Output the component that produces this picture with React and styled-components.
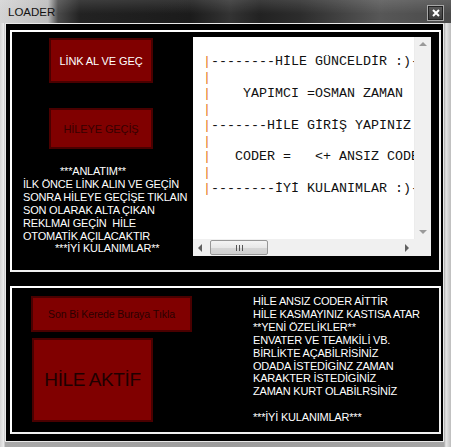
import React from 'react';
import styled, { createGlobalStyle } from 'styled-components';

const GlobalStyle = createGlobalStyle`
  html, body {
    margin: 0;
    padding: 0;
    background: #b4b4b4;
  }
  * {
    box-sizing: border-box;
  }
`;

const infoLines = [
  { text: '***ANLATIM**', indent: 37 },
  { text: 'İLK ÖNCE LİNK ALIN VE GEÇİN' },
  { text: 'SONRA HİLEYE GEÇİŞE TIKLAIN' },
  { text: 'SON OLARAK ALTA ÇIKAN' },
  { text: 'REKLMAI GEÇİN  HİLE' },
  { text: 'OTOMATİK AÇILACAKTIR' },
  { text: '***İYİ KULANIMLAR**', indent: 32 },
];

const featureLines = [
  'HİLE ANSIZ CODER AİTTİR',
  'HİLE KASMAYINIZ KASTISA ATAR',
  '**YENİ ÖZELİKLER**',
  'ENVATER VE TEAMKİLİ VB.',
  'BİRLİKTE AÇABİLRİSİNİZ',
  'ODADA İSTEDİGİNZ ZAMAN',
  'KARAKTER İSTEDİGİNİZ',
  'ZAMAN KURT OLABİLRSİNİZ',
  '',
  '***İYİ KULANIMLAR***',
];

// the box is narrower than its text, so the right end is clipped like in the form
const boxLines = [
  '--------HİLE GÜNCELDİR :)---',
  '',
  '    YAPIMCI =OSMAN ZAMAN',
  '',
  '-------HİLE GİRİŞ YAPINIZ',
  '',
  '   CODER =   <+ ANSIZ CODER',
  '',
  '--------İYİ KULANIMLAR :)---',
];

const App = () => {
  return (
    <>
      <GlobalStyle />
      <Window>
        <TitleBar>
          <Title>LOADER</Title>
          <CloseButton>
            <svg width="8" height="8" viewBox="0 0 8 8">
              <path d="M1 1 L7 7 M7 1 L1 7" stroke="#fff" strokeWidth="2" />
            </svg>
          </CloseButton>
        </TitleBar>
        <Client>
          <TopPanel>
            <LeftColumn>
              <RedButton width={104} height={45} tone="#fff">
                LİNK AL VE GEÇ
              </RedButton>
              <RedButton width={104} height={41} top={25} tone="#360000">
                HİLEYE GEÇİŞ
              </RedButton>
              <InfoLabel>
                {infoLines.map((l, i) => (
                  <Line key={i} indent={l.indent}>
                    {l.text}
                  </Line>
                ))}
              </InfoLabel>
            </LeftColumn>
            <TextBox>
              <TextArea>
                {boxLines.map((l, i) => (
                  <CodeLine key={i}>
                    <Pipe>|</Pipe>
                    {l}
                  </CodeLine>
                ))}
              </TextArea>
              <VScroll>
                <Arrow dir="up" />
                <Arrow dir="down" />
              </VScroll>
              <HScroll>
                <Arrow dir="left" />
                <Thumb>
                  <Grip />
                </Thumb>
                <Spacer />
                <Arrow dir="right" />
              </HScroll>
              <Corner />
            </TextBox>
          </TopPanel>
          <BottomPanel>
            <ButtonColumn>
              <RedButton width={161} height={36} small tone="#2a0000">
                Son Bi Kerede Buraya Tıkla
              </RedButton>
              <RedButton width={121} height={84} big top={6} shift={1} tone="#1e0000">
                HİLE AKTİF
              </RedButton>
            </ButtonColumn>
            <FeatureLabel>
              {featureLines.map((l, i) => (
                <Line key={i}>{l || '\u00a0'}</Line>
              ))}
            </FeatureLabel>
          </BottomPanel>
        </Client>
      </Window>
    </>
  );
};

export default App;

const Window = styled.div`
  width: 451px;
  height: 447px;
  display: flex;
  flex-direction: column;
  padding: 0 7px 5px 5px;
  background: linear-gradient(90deg, #d2d2d2 0, #ededed 4px, #a9a9a9 5px, #9c9c9c 50%, #a6a6a6 444px, #e6e6e6 446px, #bdbdbd 451px);
`;

const TitleBar = styled.div`
  height: 23px;
  margin: 0 -7px 0 -5px;
  padding: 0 7px 0 8px;
  display: flex;
  align-items: center;
  justify-content: space-between;
  background:
    linear-gradient(180deg, rgba(255, 255, 255, 0.12) 0, rgba(255, 255, 255, 0) 60%),
    linear-gradient(90deg, #d4d4d4 0, #bcbcbc 48px, #4a4a4a 58px, #222 80px, #1b1b1b 190px, #333 230px, #222 260px, #2c2c2c 300px, #575757 380px, #4a4a4a 451px);
`;

const Title = styled.span`
  font-family: 'Liberation Sans', Arial, sans-serif;
  font-size: 11.5px;
  color: #111;
  margin-top: 1px;
`;

const CloseButton = styled.div`
  width: 17px;
  height: 16px;
  margin-top: 3px;
  display: flex;
  align-items: center;
  justify-content: center;
  border: 1px solid #a8a8a8;
  background: linear-gradient(180deg, #5a5a5a, #3a3a3a);
  box-shadow: inset 0 0 0 1px #222;
`;

const Client = styled.div`
  flex: 1;
  display: flex;
  flex-direction: column;
  gap: 14px;
  padding: 6px 2px 7px 4px;
  background: #000;
  border: 1px solid #e8e8e8;
`;

const Panel = styled.div`
  border: 2px solid #fff;
  border-right-color: #f0f0f0;
  border-bottom-color: #f0f0f0;
  background: #000;
  display: flex;
`;

const TopPanel = styled(Panel)`
  height: 242px;
`;

const BottomPanel = styled(Panel)`
  height: 148px;
`;

const LeftColumn = styled.div`
  width: 181px;
  display: flex;
  flex-direction: column;
  padding: 6px 0 0 11px;
`;

const RedButton = styled.div`
  width: ${(p) => p.width}px;
  height: ${(p) => p.height}px;
  margin-top: ${(p) => p.top || 0}px;
  margin-left: ${(p) => (p.small || p.big ? p.shift || 0 : 26)}px;
  display: flex;
  align-items: center;
  justify-content: center;
  background: #800000;
  border: 2px solid #4a0000;
  font-family: 'Liberation Sans', Arial, sans-serif;
  font-size: ${(p) => (p.big ? 19 : p.small ? 10.5 : 11)}px;
  letter-spacing: ${(p) => (p.big ? -0.4 : -0.1)}px;
  color: ${(p) => p.tone};
  white-space: nowrap;
`;

const InfoLabel = styled.div`
  margin-top: 16px;
`;

const Line = styled.div`
  font-family: 'Liberation Sans', Arial, sans-serif;
  font-size: 11px;
  line-height: 12.9px;
  letter-spacing: -0.2px;
  color: #fff;
  white-space: pre;
  padding-left: ${(p) => p.indent || 0}px;
`;

const TextBox = styled.div`
  width: 238px;
  height: 219px;
  margin-top: 5px;
  background: #fff;
  display: grid;
  grid-template-columns: 1fr 17px;
  grid-template-rows: 1fr 17px;
`;

const TextArea = styled.div`
  overflow: hidden;
  padding: 17px 0 0 10px;
`;

const CodeLine = styled.div`
  font-family: 'Liberation Mono', 'Courier New', monospace;
  font-size: 13.33px;
  line-height: 15.9px;
  color: #111;
  white-space: pre;
`;

const Pipe = styled.span`
  color: #e5781f;
`;

const VScroll = styled.div`
  background: #f0f0f0;
  border-left: 1px solid #ececec;
  display: flex;
  flex-direction: column;
  justify-content: space-between;
  align-items: center;
  padding: 5px 0;
`;

const HScroll = styled.div`
  background: #f0f0f0;
  display: flex;
  align-items: center;
  padding: 0 5px 0 5px;
`;

const Corner = styled.div`
  background: #f0f0f0;
`;

const arrowShapes = {
  up: 'border-left: 4px solid transparent; border-right: 4px solid transparent; border-bottom: 4px solid #9a9a9a;',
  down: 'border-left: 4px solid transparent; border-right: 4px solid transparent; border-top: 4px solid #9a9a9a;',
  left: 'border-top: 4px solid transparent; border-bottom: 4px solid transparent; border-right: 4px solid #606060;',
  right: 'border-top: 4px solid transparent; border-bottom: 4px solid transparent; border-left: 4px solid #606060;',
};

const Arrow = styled.div`
  width: 0;
  height: 0;
  ${(p) => arrowShapes[p.dir]}
`;

const Thumb = styled.div`
  width: 58px;
  height: 15px;
  margin-left: 8px;
  border: 1px solid #979797;
  border-radius: 2px;
  background: linear-gradient(180deg, #f4f4f4 0, #e8e8e8 50%, #d6d6d6 51%, #cfcfcf 100%);
  display: flex;
  align-items: center;
  justify-content: center;
`;

const Grip = styled.div`
  width: 7px;
  height: 6px;
  background: repeating-linear-gradient(90deg, #555 0, #555 1px, transparent 1px, transparent 3px);
`;

const Spacer = styled.div`
  flex: 1;
`;

const ButtonColumn = styled.div`
  width: 180px;
  display: flex;
  flex-direction: column;
  padding: 8px 0 0 19px;
`;

const FeatureLabel = styled.div`
  margin-left: 61px;
  padding-top: 7px;
`;
